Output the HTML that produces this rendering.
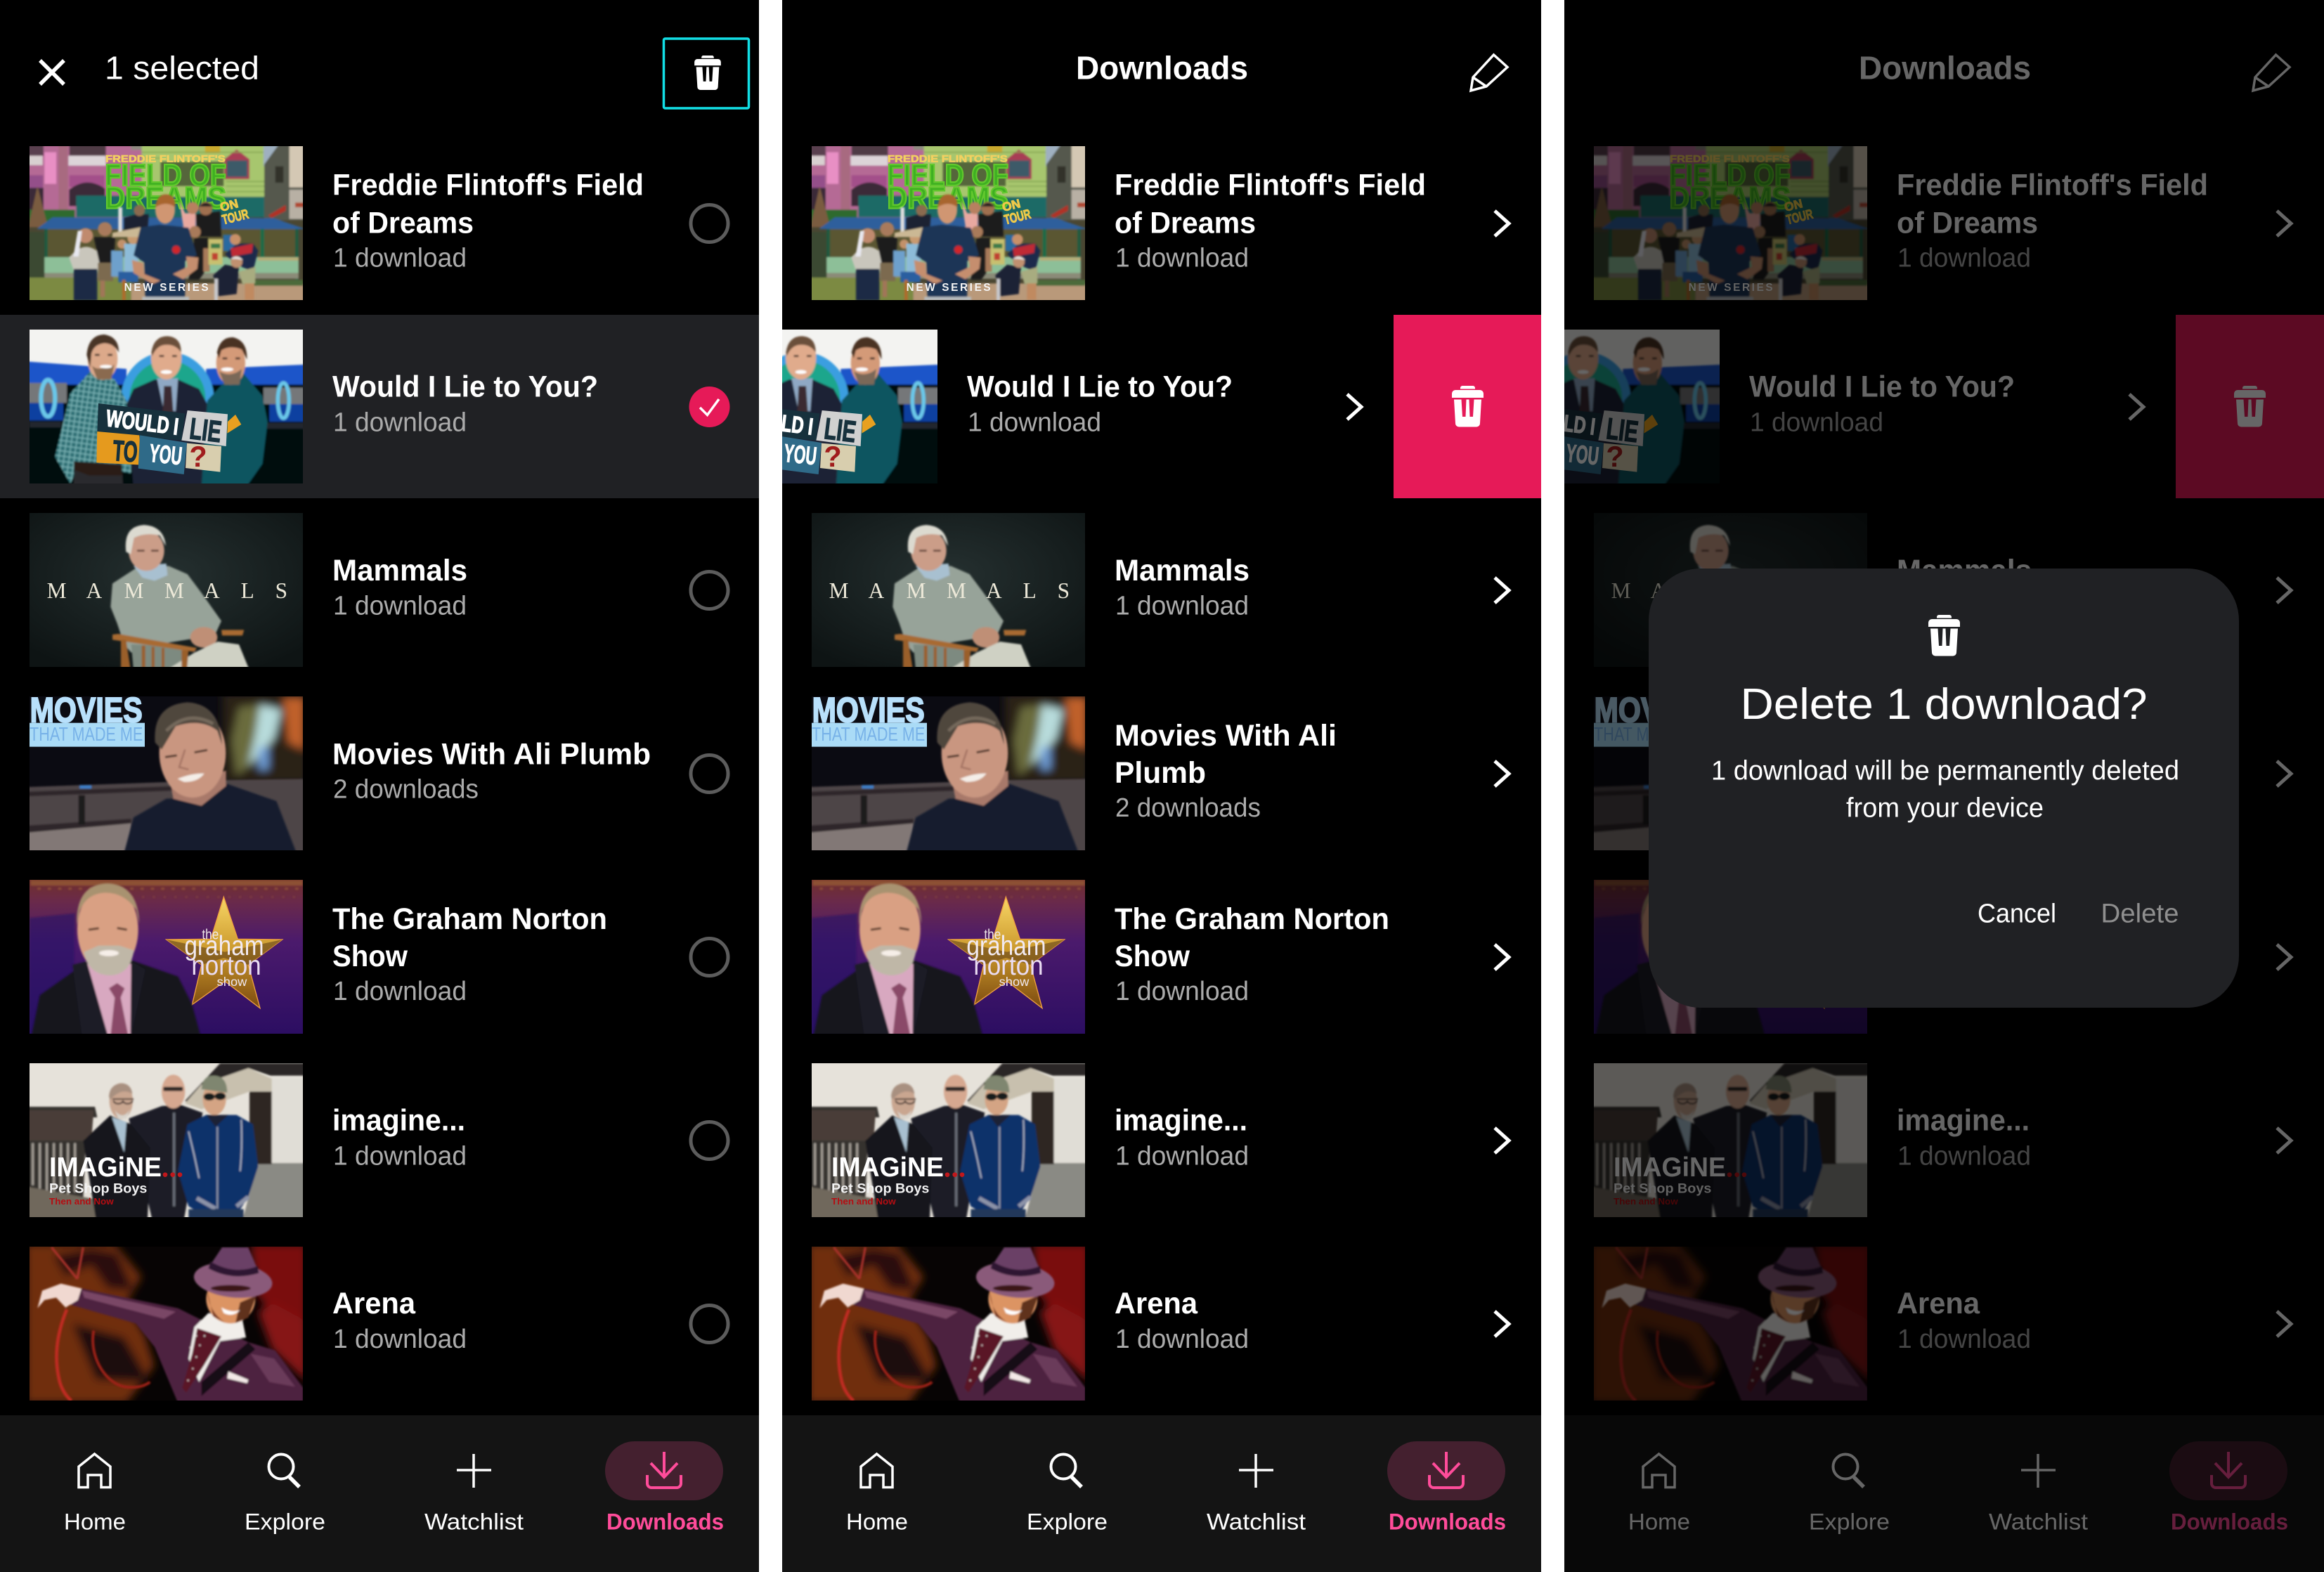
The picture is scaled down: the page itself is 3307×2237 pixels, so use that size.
<!DOCTYPE html>
<html lang="en">
<head>
<meta charset="utf-8">
<title>Downloads</title>
<style>
html,body{margin:0;padding:0;background:#fff;width:3307px;height:2237px;overflow:hidden}
svg{display:block}
text{font-family:"Liberation Sans",sans-serif;white-space:pre}
.t{font-size:43px;font-weight:700;fill:#fff;transform:translate(-2px,.5px)}
.s{font-size:38px;fill:#ababab;transform:translate(-3px,-.5px)}
.n{font-size:32px;fill:#fff;transform:translate(-1px,0)}
.d{font-size:32px;font-weight:700;fill:#ff4c9a;transform:translate(-1px,0)}
.h{font-size:46px;fill:#fff;transform:translate(-2px,0)}
.hb{font-size:46px;font-weight:700;fill:#fff;transform:translate(-2px,0)}
</style>
</head>
<body>
<svg xmlns="http://www.w3.org/2000/svg" width="3307" height="2237" viewBox="0 0 3307 2237">
<defs>
<filter id="b" x="-5%" y="-5%" width="110%" height="110%"><feGaussianBlur stdDeviation="4"/></filter>
<filter id="b2" x="-20%" y="-20%" width="140%" height="140%"><feGaussianBlur stdDeviation="18"/></filter>
<clipPath id="pc"><rect x="0" y="0" width="1081" height="2237"/></clipPath>
<linearGradient id="gs" x1="0" y1="0" x2="0" y2="1"><stop offset="0" stop-color="#f8d666"/><stop offset=".5" stop-color="#c9962a"/><stop offset="1" stop-color="#7b4a10"/></linearGradient>
<linearGradient id="gp" x1="0" y1="0" x2="0" y2="1"><stop offset="0" stop-color="#71302c"/><stop offset=".14" stop-color="#6a2a4a"/><stop offset=".4" stop-color="#4b1a6c"/><stop offset="1" stop-color="#2c0e62"/></linearGradient>
<radialGradient id="gm" cx=".5" cy=".4" r=".7"><stop offset="0" stop-color="#253030"/><stop offset="1" stop-color="#0e1414"/></radialGradient>
<pattern id="chk" width="22" height="22" patternUnits="userSpaceOnUse" patternTransform="rotate(8)"><rect width="22" height="22" fill="#2f6f74"/><path d="M0 5H22M5 0V22" stroke="#7fb8ba" stroke-width="4"/></pattern>

<symbol id="trash" viewBox="0 0 45 58.5">
<path fill="currentColor" d="M15 0h15a3 3 0 0 1 3 3v1.500H12V3a3 3 0 0 1 3-3zM5 6h35a5 5 0 0 1 5 5v6H0v-6a5 5 0 0 1 5-5zM3 19.500H13.500L15 44H19.500L20.500 19.500H24.500L25.500 44H30L31.500 19.500H42L40 53.500a5 5 0 0 1-5 5H10a5 5 0 0 1-5-5Z"/>
</symbol>

<symbol id="t1" viewBox="66 54 1167 657">
<rect x="66" y="54" width="1167" height="657" fill="#4a4632"/>
<g filter="url(#b)">
<rect x="50" y="40" width="500" height="320" fill="#b56a95"/>
<rect x="50" y="40" width="76" height="55" fill="#5a4050"/><rect x="236" y="40" width="156" height="55" fill="#503a45"/>
<rect x="50" y="95" width="72" height="40" fill="#d8d0d0"/><rect x="232" y="95" width="160" height="42" fill="#dcd4d8"/>
<rect x="130" y="80" width="50" height="135" fill="#e88fc4"/><rect x="190" y="40" width="40" height="290" fill="#a86a80"/>
<rect x="50" y="178" width="74" height="55" fill="#94508a"/><rect x="236" y="178" width="150" height="50" fill="#a3508a"/>
<path d="M235 240Q310 180 388 235V310H235Z" fill="#3a2a38"/><rect x="50" y="232" width="76" height="95" fill="#3a2c38"/>
<rect x="500" y="40" width="50" height="30" fill="#8f8a80"/>
<rect x="50" y="325" width="210" height="62" fill="#2d6b2e"/>
<path d="M100 225L145 400H60Z" fill="#7a5c40"/>
<rect x="265" y="265" width="810" height="92" fill="#1e6a66"/>
<rect x="545" y="40" width="524" height="230" fill="#a7c66e"/>
<rect x="815" y="40" width="65" height="44" fill="#c9a92f"/>
<rect x="625" y="120" width="270" height="105" fill="#55663a"/>
<path d="M898 110L950 68L1005 110V195H898Z" fill="#a83c54"/><rect x="908" y="115" width="88" height="70" fill="#3c5a68"/>
<path d="M545 80H1069M545 105H625M905 205H1069M905 225H1069M905 248H1069" stroke="#7f9f4e" stroke-width="4"/>
<rect x="1065" y="40" width="80" height="100" fill="#9fb0c0"/>
<path d="M1068 132L1135 40H1250V370H1068Z" fill="#55584e"/>
<rect x="1175" y="40" width="70" height="190" fill="#d4c8b4"/><rect x="1175" y="240" width="70" height="125" fill="#b8b0a4"/>
<rect x="1115" y="140" width="35" height="70" fill="#33302a"/>
<path d="M1085 350L1160 305V330L1100 360Z" fill="#b03028"/><rect x="1200" y="295" width="40" height="20" fill="#b04a30"/>
<rect x="130" y="400" width="1085" height="135" fill="#5a5630"/>
<rect x="130" y="405" width="14" height="130" fill="#1d5a40"/><rect x="1052" y="405" width="16" height="130" fill="#1d6a46"/><rect x="1200" y="405" width="14" height="220" fill="#1d5a40"/>
<path d="M100 405L165 358H885L1110 362L1245 408H100Z" fill="#2f5f9c"/>
<rect x="115" y="528" width="1100" height="90" fill="#8dbf98"/><rect x="115" y="595" width="1100" height="25" fill="#8b8b78"/>
<rect x="1040" y="530" width="175" height="12" fill="#b9ac74"/>
<rect x="50" y="420" width="80" height="200" fill="#3a4a30"/>
<rect x="50" y="615" width="450" height="110" fill="#7b8a42"/><rect x="500" y="640" width="750" height="85" fill="#b9997a"/>
<rect x="1020" y="625" width="215" height="25" fill="#4b6a3a"/>
</g>
<text x="390" y="121" font-size="42" font-weight="700" fill="#f2d060" stroke="#f2d060" stroke-width="2" textLength="512" lengthAdjust="spacingAndGlyphs">FREDDIE FLINTOFF'S</text>
<text x="388" y="222" font-size="130" font-weight="700" fill="#3fb022" stroke="#62c82e" stroke-width="7" textLength="518" lengthAdjust="spacingAndGlyphs">FIELD OF</text>
<text x="388" y="320" font-size="130" font-weight="700" fill="#3fb022" stroke="#62c82e" stroke-width="7" textLength="518" lengthAdjust="spacingAndGlyphs">DREAMS</text>
<g transform="rotate(-14 930 330)"><text x="885" y="322" font-size="52" font-weight="700" fill="#eec94a" stroke="#eec94a" stroke-width="3">ON</text><text x="880" y="378" font-size="58" font-weight="700" fill="#eec94a" stroke="#eec94a" stroke-width="3" textLength="115" lengthAdjust="spacingAndGlyphs">TOUR</text></g>
<g filter="url(#b)">
<path d="M235 530Q305 440 378 525L375 585H255Z" fill="#c9c6bc"/><rect x="255" y="578" width="100" height="135" fill="#1c2a44"/><circle cx="305" cy="436" r="32" fill="#c08a6e"/>
<path d="M253 525L272 415H290L275 525Z" fill="#e8e8f0"/>
<path d="M340 442H432L425 556H365Z" fill="#1e1c1e"/><rect x="358" y="552" width="65" height="78" fill="#7c6a50"/><circle cx="388" cy="408" r="30" fill="#a87a5c"/>
<rect x="368" y="628" width="20" height="70" fill="#a07658"/>
<rect x="415" y="500" width="50" height="110" fill="#6ea0cc"/><circle cx="461" cy="472" r="20" fill="#c2916a"/>
<rect x="470" y="470" width="60" height="120" fill="#8dbbd8"/><circle cx="508" cy="448" r="24" fill="#c89a70"/><rect x="445" y="590" width="85" height="45" fill="#2a5fa0"/>
<path d="M470 360L520 345H575L570 415H470Z" fill="#1d2030"/><circle cx="535" cy="328" r="24" fill="#8a6a50"/>
<rect x="445" y="315" width="17" height="108" fill="#ddd"/><path d="M420 424L540 400V442H420Z" fill="#cbb894"/>
<path d="M705 285L730 340H775V412H725Z" fill="#e8a8a0"/><circle cx="762" cy="318" r="26" fill="#b88060"/>
<path d="M775 345L880 332L885 440H782Z" fill="#1c1a1c"/><circle cx="818" cy="320" r="29" fill="#a07050"/><path d="M790 312Q818 280 848 312Z" fill="#222"/>
<path d="M770 445H830L835 560L790 625L745 625Z" fill="#1a1a1c"/><circle cx="772" cy="420" r="25" fill="#a87a5a"/>
<path d="M808 490H835V590H808Z" fill="#a87a5a"/>
<rect x="830" y="450" width="60" height="110" fill="#c8c070"/><rect x="840" y="470" width="40" height="20" fill="#3a7a4a"/><rect x="845" y="510" width="25" height="30" fill="#c04030"/>
<rect x="893" y="432" width="60" height="70" fill="#2b6aa0"/>
<path d="M900 515L950 470H1020L1042 500L1020 590L950 560Z" fill="#1a2a4c"/><path d="M925 490L1020 470L1015 510L930 525Z" fill="#bf2a34"/><circle cx="945" cy="452" r="23" fill="#c89068"/>
<path d="M960 590L1030 570V640L975 645Z" fill="#a8ac80"/><rect x="985" y="640" width="40" height="70" fill="#c08a60"/>
<path d="M850 605L900 560L960 570L950 685L870 695Z" fill="#1b2335"/><circle cx="950" cy="548" r="25" fill="#c09070"/><path d="M925 535Q950 515 978 540L950 535Z" fill="#e8e8e8"/>
<rect x="855" y="620" width="15" height="95" fill="#c8c8cc"/>
<path d="M540 400L620 390L680 395L745 402L780 520L730 545V700H560L555 550L510 520Z" fill="#1a3657"/>
<path d="M503 540L552 552L556 600L625 628L592 642L510 595Z" fill="#c58e6e"/><path d="M735 525L787 530L782 578L722 622L678 600L740 570Z" fill="#c58e6e"/>
<ellipse cx="645" cy="325" rx="42" ry="60" fill="#d09672"/><path d="M603 315Q610 258 650 260Q692 262 688 315Q650 285 603 315Z" fill="#a8652f"/>
<circle cx="692" cy="496" r="17" fill="#d0282c"/>
<rect x="547" y="697" width="200" height="16" fill="#b7bcc0"/>
<rect x="462" y="625" width="14" height="88" fill="#b06a2a"/>
</g>
<text x="470" y="672" font-size="46" font-weight="700" fill="#f4f4f4" textLength="360" lengthAdjust="spacing">NEW SERIES</text>
</symbol>

<symbol id="t2" viewBox="66 27 1167 657">
<rect x="66" y="27" width="1167" height="657" fill="#f3f3f1"/>
<g filter="url(#b)">
<path d="M50 163L480 195V270H50ZM820 195L1250 176V270H820Z" fill="#1a55c9"/>
<rect x="50" y="262" width="1200" height="440" fill="#06080c"/>
<rect x="50" y="340" width="160" height="75" fill="#0f3fa0"/><rect x="1090" y="345" width="160" height="75" fill="#0f3fa0"/>
<circle cx="655" cy="320" r="180" fill="#1fa68c" stroke="#3a9ee0" stroke-width="36"/>
<rect x="50" y="255" width="175" height="85" fill="#757779"/><rect x="1065" y="275" width="180" height="70" fill="#757779"/>
<ellipse cx="145" cy="320" rx="30" ry="78" fill="none" stroke="#6bc8ea" stroke-width="18"/><ellipse cx="1150" cy="330" rx="24" ry="75" fill="none" stroke="#6bc8ea" stroke-width="16"/>
<rect x="1078" y="425" width="160" height="25" fill="#24282e"/><rect x="66" y="420" width="135" height="25" fill="#24282e"/>
<path d="M240 300L330 200L430 240L485 340L500 640L280 600L240 684L175 570Z" fill="url(#chk)"/>
<path d="M255 590L460 600L465 700H255Z" fill="#29292e"/><path d="M255 590L460 608V650H320L255 625Z" fill="#2c1e18"/>
<ellipse cx="378" cy="152" rx="64" ry="90" fill="#dca98a"/><path d="M310 135Q318 50 385 48Q448 58 447 125Q425 85 385 85Q340 90 330 130L325 190Z" fill="#4a3526"/><path d="M332 180Q350 200 380 190Q410 195 428 175L415 240H355Z" fill="#8a6a50"/>
<path d="M480 345L510 280L600 240H700L790 280L828 350L800 700H510Z" fill="#1c2234"/>
<path d="M610 235H700L690 375H640Z" fill="#8fa8c4"/><path d="M640 268H672L680 380H635Z" fill="#3a2a30"/>
<ellipse cx="650" cy="148" rx="65" ry="92" fill="#e0ab8c"/><path d="M586 125Q596 55 655 55Q714 58 713 125Q690 90 650 92Q610 92 590 140Z" fill="#6a4f3a"/>
<path d="M825 330L890 260L980 215L1060 310L1082 420L1060 600L990 700H800Z" fill="#0e5560"/>
<ellipse cx="925" cy="170" rx="62" ry="92" fill="#d49a78"/><path d="M866 125Q880 58 935 60Q997 75 994 155L972 112Q925 92 885 115L875 150Z" fill="#4a3020"/><path d="M876 205Q925 235 972 195L962 262H898Z" fill="#7a6858"/>
<path d="M345 135h20M400 135h20M620 140h20M675 140h20M890 150h20M945 150h20" stroke="#3a2a24" stroke-width="8"/>
<ellipse cx="392" cy="185" rx="26" ry="7" fill="#fff"/><ellipse cx="650" cy="208" rx="24" ry="8" fill="#fff"/><ellipse cx="910" cy="197" rx="26" ry="8" fill="#fff"/>
</g>
<path d="M360 342L730 385L715 500L355 465Z" fill="#17313d"/>
<path d="M740 372L912 388L905 525L715 500Z" fill="#d0d0d0"/>
<path d="M912 420L945 390L970 432L910 470Z" fill="#e8a020"/>
<path d="M355 462L535 478L545 605L352 595Z" fill="#e59a1e"/>
<path d="M537 478L738 510L725 645L530 620Z" fill="#2f6a88"/>
<path d="M738 512L885 525L880 635L732 618Z" fill="#d8ceae"/>
<g font-weight="700">
<text transform="rotate(7 390 420)" x="392" y="438" font-size="100" fill="#fff" stroke="#fff" stroke-width="4" textLength="310" lengthAdjust="spacingAndGlyphs">WOULD I</text>
<text transform="rotate(7 750 470)" x="748" y="492" font-size="128" fill="#17313d" stroke="#17313d" stroke-width="4" textLength="135" lengthAdjust="spacingAndGlyphs">LIE</text>
<text transform="rotate(4 420 575)" x="420" y="585" font-size="124" fill="#17313d" stroke="#17313d" stroke-width="4" textLength="105" lengthAdjust="spacingAndGlyphs">TO</text>
<text transform="rotate(6 575 580)" x="575" y="590" font-size="108" fill="#fff" stroke="#fff" stroke-width="3" textLength="140" lengthAdjust="spacingAndGlyphs">YOU</text>
<text x="748" y="612" font-size="124" fill="#a01c1c">?</text>
</g>
</symbol>

<symbol id="t3" viewBox="66 29 1167 657">
<rect x="66" y="29" width="1167" height="657" fill="url(#gm)"/>
<g filter="url(#b)">
<path d="M420 330L520 265L660 255L740 290L800 370L885 490L860 545L770 565L600 592L500 625L470 590L440 500L412 430Z" fill="#97a399"/>
<path d="M500 590L735 600L745 700H510Z" fill="#7d8a80"/>
<path d="M510 255L650 245L655 295L600 318L548 305Z" fill="#a8c0d0"/>
<ellipse cx="565" cy="190" rx="76" ry="86" fill="#cb9d88"/>
<path d="M478 195Q465 85 555 80Q640 85 648 170L622 125Q560 110 512 135L498 205Z" fill="#dcdad0"/>
<path d="M525 190h32M585 190h32" stroke="#5a3a30" stroke-width="8"/>
<ellipse cx="810" cy="560" rx="58" ry="44" fill="#bf8f76"/>
<path d="M770 625L870 578L960 590L1005 700H650Z" fill="#cfd1c4"/>
<path d="M420 548L445 545L780 605L770 622L420 570ZM885 528H982L975 552H888Z" fill="#a86a30"/>
<path d="M456 570H478L498 700H456ZM545 595H560V700H545ZM587 600H600V700H587ZM630 605H642V700H630ZM715 615H745L738 700H715Z" fill="#9a5e2a"/>
</g>
<text y="392" font-size="94" fill="#ece8d8" x="140 308 470 642 810 968 1115" style="font-family:'Liberation Serif',serif">MAMMALS</text>
</symbol>

<symbol id="t4" viewBox="66 813 1167 657">
<rect x="66" y="813" width="1167" height="657" fill="#0b0b12"/>
<g filter="url(#b2)">
<rect x="890" y="800" width="360" height="380" fill="#2c2016"/>
<path d="M960 860L1050 850L1040 1000L1000 1110L950 1150L930 1000Z" fill="#6a6c3c"/>
<path d="M1050 850L1140 870L1110 990L1060 1050L1000 1110L1030 980Z" fill="#b8dcdc"/>
<path d="M1150 820H1240V1040L1170 1010Z" fill="#c0602a"/>
<rect x="1045" y="1030" width="40" height="95" fill="#6f9fd8"/>
</g>
<g filter="url(#b)">
<path d="M50 1200L900 1170L1250 1165V1490H50Z" fill="#4d4546"/>
<path d="M50 1385L500 1350V1490H50Z" fill="#827876"/>
<path d="M50 1220L700 1195V1215L50 1240ZM50 1365L500 1335V1355L50 1395Z" fill="#2d2829"/>
<rect x="275" y="1235" width="28" height="125" fill="#1e1a1a"/>
<rect x="280" y="1192" width="50" height="14" fill="#3d7fc8"/>
</g>
<text x="68" y="922" font-size="150" font-weight="700" fill="#b8e0fb" stroke="#b8e0fb" stroke-width="6" textLength="480" lengthAdjust="spacingAndGlyphs">MOVIES</text>
<rect x="66" y="926" width="492" height="102" fill="#aadbf6"/>
<text x="66" y="1002" font-size="82" fill="#78b2e8" textLength="484" lengthAdjust="spacingAndGlyphs">THAT MADE ME</text>
<g filter="url(#b)">
<path d="M470 1480L510 1330L650 1250L800 1245L905 1185L1120 1260L1205 1480Z" fill="#131a2e"/>
<path d="M670 1200L905 1130V1195L800 1280L680 1250Z" fill="#a8796a"/>
<ellipse cx="762" cy="1055" rx="142" ry="190" fill="#c99680"/>
<path d="M602 1010Q590 850 740 838Q880 845 888 1020L868 960Q800 905 690 940L630 1040Z" fill="#4f463e"/>
<path d="M650 960Q740 870 850 930" stroke="#74695c" stroke-width="14" fill="none"/>
<path d="M698 1165Q760 1140 812 1142Q785 1180 725 1178Z" fill="#f4eee8"/>
<path d="M645 1072L695 1065M770 1052L825 1042" stroke="#4a3028" stroke-width="9"/>
<path d="M730 1040L705 1115L745 1125" stroke="#a07060" stroke-width="7" fill="none"/>
</g>
</symbol>

<symbol id="t5" viewBox="66 37 1167 657">
<rect x="66" y="37" width="1167" height="657" fill="url(#gp)"/>
<g filter="url(#b)">
<path d="M70 50H1233" stroke="#a9713a" stroke-width="24" opacity=".5"/>
<path d="M100 75H1233" stroke="#b87a3a" stroke-width="8" opacity=".5" stroke-dasharray="14 30"/>
<path d="M500 110H1233" stroke="#b07040" stroke-width="6" opacity=".35" stroke-dasharray="10 36"/>
<path d="M66 200L260 180L250 694H66Z" fill="#261466" opacity=".6"/>
</g>
<path d="M895 110L955 290L1145 292L1000 400L1050 585L900 470L760 570L800 400L650 292L840 290Z" fill="url(#gs)" stroke="#f0a040" stroke-width="4"/>
<path d="M650 292L800 400L895 370L1000 400L1145 292L900 345Z" fill="#5a3a18" opacity=".55"/>
<text x="802" y="290" font-size="62" fill="#efe8e8" textLength="72" lengthAdjust="spacingAndGlyphs">the</text>
<text x="727" y="358" font-size="118" fill="#f2eaf2" textLength="340" lengthAdjust="spacingAndGlyphs">graham</text>
<text x="757" y="442" font-size="118" fill="#eadcf2" textLength="298" lengthAdjust="spacingAndGlyphs">norton</text>
<text x="866" y="490" font-size="52" fill="#f0e8f0" textLength="128" lengthAdjust="spacingAndGlyphs">show</text>
<g filter="url(#b)">
<path d="M75 700L110 530L300 395L500 380L700 450L760 570L795 700Z" fill="#14141e"/>
<path d="M310 395L500 395L497 700H392Z" fill="#d8a8c0"/>
<path d="M405 500L440 478L472 500L455 540L487 700H412L430 540Z" fill="#8a4a68"/>
<path d="M250 400L310 385L400 700H290ZM500 385L560 420L500 700Z" fill="#1d1d28"/>
<ellipse cx="400" cy="250" rx="130" ry="188" fill="#d9a083"/>
<path d="M268 230Q262 55 400 52Q530 58 535 225L522 165Q470 92 390 92Q310 95 280 170Z" fill="#a8926f"/>
<path d="M298 345L360 318H450L512 338Q495 445 405 445Q315 440 298 345Z" fill="#bfb7a7"/>
<ellipse cx="405" cy="350" rx="42" ry="13" fill="#f6eee8"/>
<path d="M318 250L362 244M440 243L482 250" stroke="#5a3a2a" stroke-width="9"/>
</g>
</symbol>

<symbol id="t6" viewBox="66 39 1167 657">
<rect x="66" y="39" width="1167" height="657" fill="#e6e2da"/>
<g filter="url(#b)">
<path d="M1040 465H1245V710H975Z" fill="#8a8a84"/>
<path d="M1095 105H1245V465H1095Z" fill="#e0ddd6"/>
<path d="M730 200L880 39H1245V92H1095L1000 60L800 235Z" fill="#2a2826"/>
<path d="M730 210L800 130L1000 60L1100 105V160H1005L800 235Z" fill="#c8c0ae"/>
<rect x="1005" y="160" width="95" height="310" fill="#2e2824"/>
<path d="M50 225H345L355 270H310L295 620L50 600Z" fill="#35302e"/>
<path d="M60 240H340L330 370H60Z" fill="#4a3e38"/>
<path d="M80 380V560M110 380V575M140 380V590M170 380V600M200 380V600M230 380V600M260 380V590" stroke="#a8a29a" stroke-width="9"/>
<path d="M50 565L350 620V710H50Z" fill="#6f685c"/>
<path d="M490 275L630 222L705 215L805 250L725 710H590Z" fill="#1a1e28"/>
<rect x="678" y="250" width="10" height="400" fill="#6a6e78"/>
<path d="M295 370L410 262L500 300L582 400L570 710H350Z" fill="#14161e"/>
<path d="M418 270L480 290L470 420Z" fill="#a8c0d0"/>
<ellipse cx="457" cy="200" rx="50" ry="76" fill="#c9a690"/>
<path d="M405 180Q410 125 465 125Q500 130 505 170Q460 140 410 195Z" fill="#a89080"/>
<path d="M430 240Q465 285 495 235L480 275H445Z" fill="#d8d4cc"/>
<path d="M425 198a20 14 0 0 0 40 0M465 198a20 14 0 0 0 40 0M420 192H510" fill="none" stroke="#3a2e2a" stroke-width="6"/>
<ellipse cx="680" cy="160" rx="50" ry="72" fill="#d6a890"/>
<rect x="637" y="140" width="84" height="18" rx="6" fill="#2a2626"/>
<path d="M700 500L740 300L820 260L950 260L1020 300L1042 480L1000 610L960 670H780L745 650Z" fill="#10306a"/>
<path d="M820 260L860 310L915 260" fill="#1a2236"/>
<path d="M745 330Q770 430 790 530M970 280Q975 400 965 500" stroke="#b8c0d0" stroke-width="5" fill="none"/>
<rect x="865" y="310" width="6" height="350" fill="#9aa0b0"/>
<path d="M780 615L860 660M950 650L1000 610" stroke="#8c93a8" stroke-width="18"/>
<rect x="745" y="662" width="235" height="48" fill="#23385a"/>
<ellipse cx="855" cy="192" rx="50" ry="68" fill="#d4a484"/>
<path d="M800 160Q800 90 855 92Q910 95 910 165L800 150Z" fill="#7f8670"/>
<ellipse cx="833" cy="182" rx="24" ry="16" fill="#141a1c"/><ellipse cx="880" cy="180" rx="24" ry="16" fill="#141a1c"/>
</g>
<text x="150" y="522" font-size="118" font-weight="700" fill="#fff" textLength="480" lengthAdjust="spacingAndGlyphs">IMAGiNE</text>
<circle cx="645" cy="515" r="10" fill="#c0181c"/><circle cx="677" cy="515" r="10" fill="#c0181c"/><circle cx="708" cy="515" r="10" fill="#c0181c"/>
<text x="150" y="592" font-size="58" font-weight="700" fill="#f2f2f2" textLength="418" lengthAdjust="spacingAndGlyphs">Pet Shop Boys</text>
<text x="150" y="642" font-size="38" font-weight="700" fill="#b50d12" textLength="275" lengthAdjust="spacingAndGlyphs">Then and Now</text>
</symbol>

<symbol id="t7" viewBox="66 822 1167 657">
<rect x="66" y="822" width="1167" height="657" fill="#070404"/>
<g filter="url(#b2)">
<path d="M50 810H430L545 950L480 1060L560 1200L600 1330L480 1490H50Z" fill="#702e10"/>
<path d="M170 860L330 830L440 850L510 1010L400 1000L330 900L220 950Z" fill="#2c100a"/>
<path d="M250 1150L470 1210L580 1400L350 1390Z" fill="#1a0a08"/>
<path d="M1010 810H1250V1150L1130 1150L1030 1020Z" fill="#7a0d0d"/>
<path d="M1040 1100L1100 1060L1250 1140V1400L1100 1260Z" fill="#861212"/>
</g>
<g filter="url(#b)">
<path d="M160 825L270 960M295 825L270 960" stroke="#a8322a" stroke-width="10" fill="none"/>
<path d="M225 1090C180 1200 170 1300 195 1400Q210 1450 245 1480" stroke="#c02c20" stroke-width="14" fill="none"/>
<path d="M340 1180C320 1280 380 1400 470 1420Q540 1430 580 1400" stroke="#9c2018" stroke-width="12" fill="none"/>
<path d="M260 995L700 1085L790 1130L1000 1230L1115 1265L1235 1425V1490H700L600 1250L520 1150L240 1070Z" fill="#4d2340"/>
<path d="M290 1010L690 1100L640 1130L300 1040Z" fill="#7a4766"/>
<path d="M1010 1280L1110 1300L1200 1420L1090 1400Z" fill="#6b3a5a"/>
<path d="M100 1085L120 1010L200 980L288 1000L272 1050L220 1082L180 1040L130 1050Z" fill="#f0d8d0"/>
<path d="M770 1165L830 1105L975 1135L990 1210L880 1225L790 1400L745 1300Z" fill="#f1eeea"/>
<path d="M782 1170L885 1205L810 1330L735 1445L718 1425L760 1280Z" fill="#5a1428"/>
<path d="M750 1250h6v6h-6zM775 1200h6v6h-6zM790 1240h6v6h-6zM775 1290h6v6h-6zM760 1340h6v6h-6zM810 1200h6v6h-6zM740 1390h6v6h-6z" fill="#e8d8d8"/>
<path d="M800 1400L1000 1230L1030 1260L800 1460Z" fill="#140812"/>
<path d="M915 1355L1000 1390L995 1405L910 1385Z" fill="#f4eae8"/>
<ellipse cx="925" cy="1045" rx="105" ry="105" fill="#dc9464"/>
<path d="M825 1010Q830 1100 900 1145L850 1120Z" fill="#7a3a20"/>
<path d="M965 1060L1035 1030L1000 1125L945 1148Z" fill="#60301a"/>
<path d="M885 1082Q930 1108 965 1092Q935 1125 895 1105Z" fill="#fff"/>
<ellipse cx="935" cy="965" rx="168" ry="74" transform="rotate(6 935 965)" fill="#8a5a7a"/>
<path d="M838 900L888 825H1000L1040 920Q940 960 838 900Z" fill="#6a3f66"/>
<path d="M838 885Q940 945 1040 905L1045 935Q930 970 830 915Z" fill="#2f1830"/>
<ellipse cx="925" cy="1000" rx="85" ry="14" fill="#3a1612"/>
</g>
</symbol>
</defs>

<rect width="3307" height="2237" fill="#fff"/>

<!-- PANEL 1 -->
<g>
<rect x="0" y="0" width="1080" height="2237" fill="#000"/>
<rect x="0" y="448" width="1080" height="261" fill="#202124"/>
<path d="M57 86L91 120M91 86L57 120" stroke="#fff" stroke-width="5.500" fill="none"/>
<text class="h" x="151" y="112.500" textLength="220" lengthAdjust="spacingAndGlyphs">1 selected</text>
<rect x="944.500" y="55" width="121" height="99" rx="2" fill="none" stroke="#12dfe6" stroke-width="3.500"/>
<use href="#trash" x="988" y="79" width="38" height="49" color="#fff"/>

<use href="#t1" x="42" y="208" width="389" height="219"/>
<use href="#t2" x="42" y="469" width="389" height="219"/>
<use href="#t3" x="42" y="730" width="389" height="219"/>
<use href="#t4" x="42" y="991" width="389" height="219"/>
<use href="#t5" x="42" y="1252" width="389" height="219"/>
<use href="#t6" x="42" y="1513" width="389" height="219"/>
<use href="#t7" x="42" y="1774" width="389" height="219"/>

<text class="t" x="475" y="277" textLength="443" lengthAdjust="spacingAndGlyphs">Freddie Flintoff's Field</text>
<text class="t" x="475" y="331" textLength="201" lengthAdjust="spacingAndGlyphs">of Dreams</text>
<text class="s" x="477" y="380" textLength="190" lengthAdjust="spacingAndGlyphs">1 download</text>
<text class="t" x="475" y="564" textLength="378" lengthAdjust="spacingAndGlyphs">Would I Lie to You?</text>
<text class="s" x="477" y="614" textLength="190" lengthAdjust="spacingAndGlyphs">1 download</text>
<text class="t" x="475" y="825.500" textLength="192" lengthAdjust="spacingAndGlyphs">Mammals</text>
<text class="s" x="477" y="875" textLength="190" lengthAdjust="spacingAndGlyphs">1 download</text>
<text class="t" x="475" y="1087" textLength="453" lengthAdjust="spacingAndGlyphs">Movies With Ali Plumb</text>
<text class="s" x="477" y="1136" textLength="207" lengthAdjust="spacingAndGlyphs">2 downloads</text>
<text class="t" x="475" y="1321.500" textLength="391" lengthAdjust="spacingAndGlyphs">The Graham Norton</text>
<text class="t" x="475" y="1374.500" textLength="107" lengthAdjust="spacingAndGlyphs">Show</text>
<text class="s" x="477" y="1423.500" textLength="190" lengthAdjust="spacingAndGlyphs">1 download</text>
<text class="t" x="475" y="1608" textLength="189" lengthAdjust="spacingAndGlyphs">imagine...</text>
<text class="s" x="477" y="1658" textLength="190" lengthAdjust="spacingAndGlyphs">1 download</text>
<text class="t" x="475" y="1868.500" textLength="118" lengthAdjust="spacingAndGlyphs">Arena</text>
<text class="s" x="477" y="1918.500" textLength="190" lengthAdjust="spacingAndGlyphs">1 download</text>

<g fill="none" stroke="#5c5c5c" stroke-width="5">
<circle cx="1009.500" cy="318" r="26.500"/>
<circle cx="1009.500" cy="840" r="26.500"/>
<circle cx="1009.500" cy="1101" r="26.500"/>
<circle cx="1009.500" cy="1362" r="26.500"/>
<circle cx="1009.500" cy="1623" r="26.500"/>
<circle cx="1009.500" cy="1884" r="26.500"/>
</g>
<circle cx="1009.500" cy="579" r="29" fill="#e61a58"/>
<path d="M996 580L1006.500 590.500L1023 568" stroke="#fff" stroke-width="3.500" fill="none"/>

<rect x="0" y="2014" width="1080" height="223" fill="#141414"/>
<path d="M112 2116.500V2087L134.500 2069L157 2087V2116.500H144V2099H125V2116.500Z" fill="none" stroke="#fff" stroke-width="3.500"/>
<circle cx="400" cy="2087" r="17.500" fill="none" stroke="#fff" stroke-width="4"/>
<path d="M412 2102L426 2116" stroke="#fff" stroke-width="5.500"/>
<path d="M650 2092H699M674 2069V2117" stroke="#fff" stroke-width="3.500"/>
<rect x="861" y="2051" width="168" height="84" rx="42" fill="#44202f"/>
<path d="M945 2066V2101M926 2082L945 2102L964 2082M921 2099V2111a6 6 0 0 0 6 6H963a6 6 0 0 0 6-6V2099" fill="none" stroke="#ff4c9a" stroke-width="4"/>
<text class="n" x="92" y="2176.700" textLength="88" lengthAdjust="spacingAndGlyphs">Home</text>
<text class="n" x="349" y="2176.700" textLength="115" lengthAdjust="spacingAndGlyphs">Explore</text>
<text class="n" x="605" y="2176.700" textLength="141" lengthAdjust="spacingAndGlyphs">Watchlist</text>
<text class="d" x="864" y="2176.700" textLength="167" lengthAdjust="spacingAndGlyphs">Downloads</text>
</g>

<!-- PANEL 2 -->
<g transform="translate(1113 0)">
<rect x="0" y="0" width="1080" height="2237" fill="#000"/>
<text class="hb" x="420" y="112.500" textLength="245" lengthAdjust="spacingAndGlyphs">Downloads</text>
<path d="M980 129L983 110L1012.500 78L1032 95.500L1002 123ZM983 110L1002 123" fill="none" stroke="#fff" stroke-width="3.500" stroke-linejoin="miter"/>

<use href="#t1" x="42" y="208" width="389" height="219"/>
<g clip-path="url(#pc)"><use href="#t2" x="-168" y="469" width="389" height="219"/></g>
<use href="#t3" x="42" y="730" width="389" height="219"/>
<use href="#t4" x="42" y="991" width="389" height="219"/>
<use href="#t5" x="42" y="1252" width="389" height="219"/>
<use href="#t6" x="42" y="1513" width="389" height="219"/>
<use href="#t7" x="42" y="1774" width="389" height="219"/>

<text class="t" x="475" y="277" textLength="443" lengthAdjust="spacingAndGlyphs">Freddie Flintoff's Field</text>
<text class="t" x="475" y="331" textLength="201" lengthAdjust="spacingAndGlyphs">of Dreams</text>
<text class="s" x="477" y="380" textLength="190" lengthAdjust="spacingAndGlyphs">1 download</text>
<text class="t" x="265" y="564" textLength="378" lengthAdjust="spacingAndGlyphs">Would I Lie to You?</text>
<text class="s" x="267" y="614" textLength="190" lengthAdjust="spacingAndGlyphs">1 download</text>
<text class="t" x="475" y="825.500" textLength="192" lengthAdjust="spacingAndGlyphs">Mammals</text>
<text class="s" x="477" y="875" textLength="190" lengthAdjust="spacingAndGlyphs">1 download</text>
<text class="t" x="475" y="1060.500" textLength="316" lengthAdjust="spacingAndGlyphs">Movies With Ali</text>
<text class="t" x="475" y="1113.500" textLength="130" lengthAdjust="spacingAndGlyphs">Plumb</text>
<text class="s" x="477" y="1162.500" textLength="207" lengthAdjust="spacingAndGlyphs">2 downloads</text>
<text class="t" x="475" y="1321.500" textLength="391" lengthAdjust="spacingAndGlyphs">The Graham Norton</text>
<text class="t" x="475" y="1374.500" textLength="107" lengthAdjust="spacingAndGlyphs">Show</text>
<text class="s" x="477" y="1423.500" textLength="190" lengthAdjust="spacingAndGlyphs">1 download</text>
<text class="t" x="475" y="1608" textLength="189" lengthAdjust="spacingAndGlyphs">imagine...</text>
<text class="s" x="477" y="1658" textLength="190" lengthAdjust="spacingAndGlyphs">1 download</text>
<text class="t" x="475" y="1868.500" textLength="118" lengthAdjust="spacingAndGlyphs">Arena</text>
<text class="s" x="477" y="1918.500" textLength="190" lengthAdjust="spacingAndGlyphs">1 download</text>

<g fill="none" stroke="#fff" stroke-width="5">
<path d="M1014 300L1034 318L1014 336"/>
<path d="M804 561L824 579L804 597"/>
<path d="M1014 822L1034 840L1014 858"/>
<path d="M1014 1083L1034 1101L1014 1119"/>
<path d="M1014 1344L1034 1362L1014 1380"/>
<path d="M1014 1605L1034 1623L1014 1641"/>
<path d="M1014 1866L1034 1884L1014 1902"/>
</g>
<rect x="870" y="448" width="210" height="261" fill="#e61a58"/>
<use href="#trash" x="953" y="549" width="45" height="58.500" color="#fff"/>

<rect x="0" y="2014" width="1080" height="223" fill="#141414"/>
<path d="M112 2116.500V2087L134.500 2069L157 2087V2116.500H144V2099H125V2116.500Z" fill="none" stroke="#fff" stroke-width="3.500"/>
<circle cx="400" cy="2087" r="17.500" fill="none" stroke="#fff" stroke-width="4"/>
<path d="M412 2102L426 2116" stroke="#fff" stroke-width="5.500"/>
<path d="M650 2092H699M674 2069V2117" stroke="#fff" stroke-width="3.500"/>
<rect x="861" y="2051" width="168" height="84" rx="42" fill="#44202f"/>
<path d="M945 2066V2101M926 2082L945 2102L964 2082M921 2099V2111a6 6 0 0 0 6 6H963a6 6 0 0 0 6-6V2099" fill="none" stroke="#ff4c9a" stroke-width="4"/>
<text class="n" x="92" y="2176.700" textLength="88" lengthAdjust="spacingAndGlyphs">Home</text>
<text class="n" x="349" y="2176.700" textLength="115" lengthAdjust="spacingAndGlyphs">Explore</text>
<text class="n" x="605" y="2176.700" textLength="141" lengthAdjust="spacingAndGlyphs">Watchlist</text>
<text class="d" x="864" y="2176.700" textLength="167" lengthAdjust="spacingAndGlyphs">Downloads</text>
</g>

<!-- PANEL 3 -->
<g transform="translate(2226 0)">
<rect x="0" y="0" width="1081" height="2237" fill="#000"/>
<text class="hb" x="421" y="112.500" textLength="245" lengthAdjust="spacingAndGlyphs">Downloads</text>
<path d="M980 129L983 110L1012.500 78L1032 95.500L1002 123ZM983 110L1002 123" fill="none" stroke="#fff" stroke-width="3.500"/>

<use href="#t1" x="42" y="208" width="389" height="219"/>
<g clip-path="url(#pc)"><use href="#t2" x="-168" y="469" width="389" height="219"/></g>
<use href="#t3" x="42" y="730" width="389" height="219"/>
<use href="#t4" x="42" y="991" width="389" height="219"/>
<use href="#t5" x="42" y="1252" width="389" height="219"/>
<use href="#t6" x="42" y="1513" width="389" height="219"/>
<use href="#t7" x="42" y="1774" width="389" height="219"/>

<text class="t" x="475" y="277" textLength="443" lengthAdjust="spacingAndGlyphs">Freddie Flintoff's Field</text>
<text class="t" x="475" y="331" textLength="201" lengthAdjust="spacingAndGlyphs">of Dreams</text>
<text class="s" x="477" y="380" textLength="190" lengthAdjust="spacingAndGlyphs">1 download</text>
<text class="t" x="265" y="564" textLength="378" lengthAdjust="spacingAndGlyphs">Would I Lie to You?</text>
<text class="s" x="267" y="614" textLength="190" lengthAdjust="spacingAndGlyphs">1 download</text>
<text class="t" x="475" y="825.500" textLength="192" lengthAdjust="spacingAndGlyphs">Mammals</text>
<text class="t" x="475" y="1608" textLength="189" lengthAdjust="spacingAndGlyphs">imagine...</text>
<text class="s" x="477" y="1658" textLength="190" lengthAdjust="spacingAndGlyphs">1 download</text>
<text class="t" x="475" y="1868.500" textLength="118" lengthAdjust="spacingAndGlyphs">Arena</text>
<text class="s" x="477" y="1918.500" textLength="190" lengthAdjust="spacingAndGlyphs">1 download</text>

<g fill="none" stroke="#fff" stroke-width="5">
<path d="M1014 300L1034 318L1014 336"/>
<path d="M804 561L824 579L804 597"/>
<path d="M1014 822L1034 840L1014 858"/>
<path d="M1014 1083L1034 1101L1014 1119"/>
<path d="M1014 1344L1034 1362L1014 1380"/>
<path d="M1014 1605L1034 1623L1014 1641"/>
<path d="M1014 1866L1034 1884L1014 1902"/>
</g>
<rect x="870" y="448" width="211" height="261" fill="#e61a58"/>
<use href="#trash" x="953" y="549" width="45" height="58.500" color="#fff"/>

<rect x="0" y="2014" width="1081" height="223" fill="#141414"/>
<path d="M112 2116.500V2087L134.500 2069L157 2087V2116.500H144V2099H125V2116.500Z" fill="none" stroke="#fff" stroke-width="3.500"/>
<circle cx="400" cy="2087" r="17.500" fill="none" stroke="#fff" stroke-width="4"/>
<path d="M412 2102L426 2116" stroke="#fff" stroke-width="5.500"/>
<path d="M650 2092H699M674 2069V2117" stroke="#fff" stroke-width="3.500"/>
<rect x="861" y="2051" width="168" height="84" rx="42" fill="#44202f"/>
<path d="M945 2066V2101M926 2082L945 2102L964 2082M921 2099V2111a6 6 0 0 0 6 6H963a6 6 0 0 0 6-6V2099" fill="none" stroke="#ff4c9a" stroke-width="4"/>
<text class="n" x="92" y="2176.700" textLength="88" lengthAdjust="spacingAndGlyphs">Home</text>
<text class="n" x="349" y="2176.700" textLength="115" lengthAdjust="spacingAndGlyphs">Explore</text>
<text class="n" x="605" y="2176.700" textLength="141" lengthAdjust="spacingAndGlyphs">Watchlist</text>
<text class="d" x="864" y="2176.700" textLength="167" lengthAdjust="spacingAndGlyphs">Downloads</text>

<rect x="0" y="0" width="1081" height="2237" fill="#000" opacity=".6"/>

<rect x="120" y="809" width="840" height="625" rx="74" ry="74" fill="#202124"/>
<use href="#trash" x="518" y="875" width="45" height="58.500" color="#fff"/>
<text x="250.500" y="1023" font-size="62" fill="#fff" textLength="579" lengthAdjust="spacingAndGlyphs">Delete 1 download?</text>
<text x="209" y="1109.500" font-size="39" fill="#fff" textLength="666" lengthAdjust="spacingAndGlyphs">1 download will be permanently deleted</text>
<text x="401" y="1162.700" font-size="39" fill="#fff" textLength="281" lengthAdjust="spacingAndGlyphs">from your device</text>
<text x="588" y="1312.500" font-size="38" fill="#fff" textLength="112" lengthAdjust="spacingAndGlyphs">Cancel</text>
<text x="763.500" y="1312.500" font-size="38" fill="#8f8f8f" textLength="111" lengthAdjust="spacingAndGlyphs">Delete</text>
</g>
</svg>
</body>
</html>
